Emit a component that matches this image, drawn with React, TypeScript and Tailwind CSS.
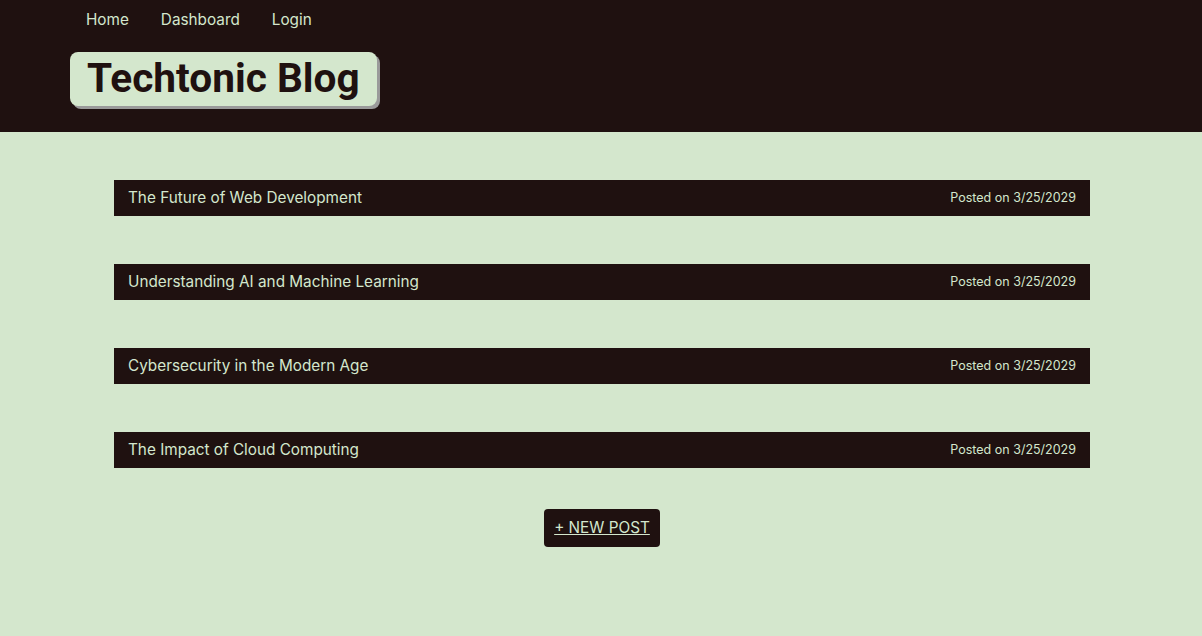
const posts = [
  "The Future of Web Development",
  "Understanding AI and Machine Learning",
  "Cybersecurity in the Modern Age",
  "The Impact of Cloud Computing",
];

export default function App() {
  return (
    <div className="min-h-[636px] bg-[#d4e7cd] font-['Inter',sans-serif]">
      <header className="bg-[#1f1110] h-[132px] px-[70px]">
        <nav className="flex gap-8 px-4 h-[39px] pt-px items-center text-[15.3px] text-[#d4e7cd]">
          <a href="#">Home</a>
          <a href="#">Dashboard</a>
          <a href="#">Login</a>
        </nav>
        <h1 className="mt-[13px] inline-block bg-[#d4e7cd] rounded-lg px-[17px] h-[54px] leading-[52px] shadow-[3px_3px_0_#9a9a9a] font-['Roboto',sans-serif] font-bold text-[40.6px] text-[#1f1110]">
          Techtonic Blog
        </h1>
      </header>
      <main className="w-[976px] ml-[114px] pt-12 flex flex-col gap-12">
        {posts.map((title) => (
          <div
            key={title}
            className="h-9 pt-px bg-[#1f1110] flex items-center justify-between px-[14px] text-[#d4e7cd]"
          >
            <span className="text-[15.3px]">{title}</span>
            <span className="text-[12.5px]">Posted on 3/25/2029</span>
          </div>
        ))}
        <div className="flex justify-center -mt-[7px]">
          <button className="h-[38px] pt-px px-[10px] rounded bg-[#1f1110] text-[#d4e7cd] text-[15.3px] underline">
            + NEW POST
          </button>
        </div>
      </main>
    </div>
  );
}
